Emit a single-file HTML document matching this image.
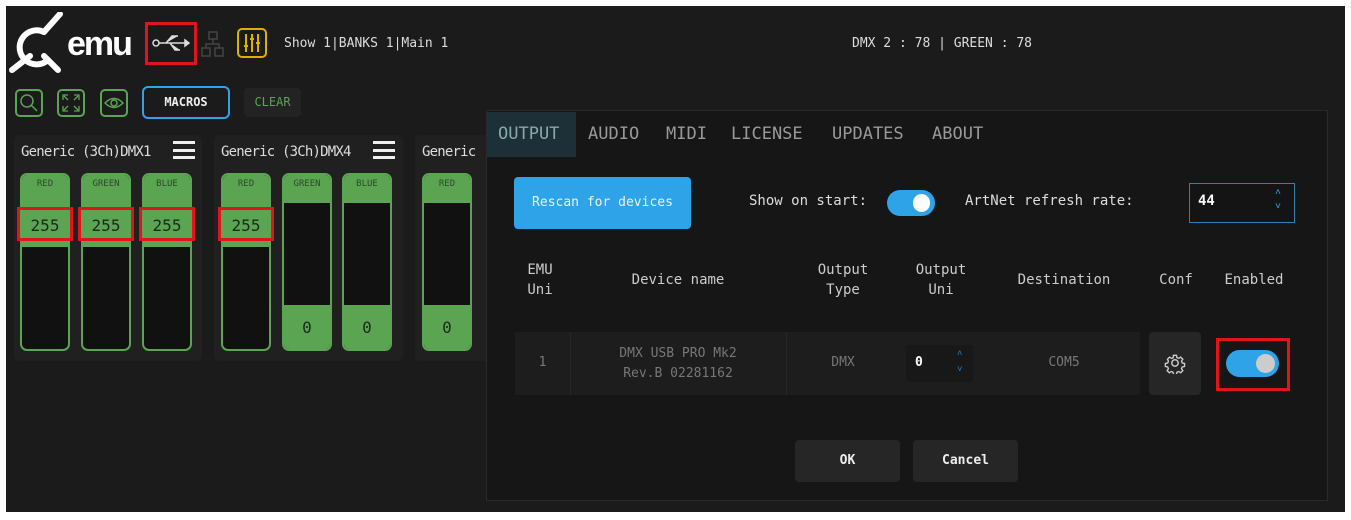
<!DOCTYPE html>
<html><head><meta charset="utf-8"><style>
*{box-sizing:border-box;margin:0;padding:0}
body{width:1351px;height:520px;background:#fff;position:relative;overflow:hidden;font-family:"DejaVu Sans Mono","Liberation Mono",monospace;}
.bg{position:absolute;left:6px;top:6px;width:1339px;height:506px;background:#1b1b1b}
.a{position:absolute}
.t{position:absolute;white-space:nowrap}
.ib{position:absolute;width:28px;height:28px;border:2px solid #5aa452;border-radius:5px}
.panel{position:absolute;top:135px;height:226px;background:#202020;border-radius:6px}
.ph{position:absolute;left:7px;top:9px;color:#ddd;font-size:14px;letter-spacing:-0.8px}
.hb{position:absolute;top:6px;width:22px;height:18px;border-top:3px solid #eee;border-bottom:3px solid #eee}
.hb:after{content:"";position:absolute;left:0;right:0;top:4.5px;border-top:3px solid #eee}
.f{position:absolute;top:173px;width:50px;height:178px;border:2px solid #5aa452;border-radius:7px;background:#111;overflow:hidden}
.f .lab{position:absolute;top:4px;width:100%;text-align:center;font-size:9px;color:#2b4a2a}
.f .g{position:absolute;left:0;right:0;background:#5aa452}
.f .v{position:absolute;width:100%;text-align:center;font-size:16px;color:#1a2a1a}
.rb{position:absolute;border:3px solid #e0141c}
.dlg{position:absolute;left:486px;top:110px;width:842px;height:391px;background:#161616;border:1px solid #2a2a2a}
.th{position:absolute;color:#ccc;font-size:14px;text-align:center;line-height:20px}
.cell{color:#777;font-size:13px;text-align:center;position:absolute}
.tab{position:absolute;top:124px;color:#999;font-size:17px;white-space:nowrap}
</style></head><body>
<div class="bg"></div>

<svg class="a" style="left:8px;top:12px" width="130" height="62" viewBox="0 0 130 62">
<path d="M52 2 L36 20" stroke="#fff" stroke-width="6" stroke-linecap="round" fill="none"/>
<path d="M36 20 A17 17 0 1 0 40 48" stroke="#fff" stroke-width="6" fill="none" stroke-linecap="round"/>
<path d="M22 44 L4 58 M36 44 L50 58" stroke="#fff" stroke-width="6" stroke-linecap="round"/>
<text x="59" y="43" fill="#fff" font-family="Liberation Sans" font-weight="bold" font-size="34" letter-spacing="-2">emu</text>
</svg>
<div class="rb" style="left:145px;top:22px;width:52px;height:43px"></div>
<svg class="a" style="left:152px;top:32px" width="38" height="22" viewBox="0 0 38 22">
<circle cx="4" cy="11" r="3" fill="none" stroke="#ddd" stroke-width="1.5"/>
<path d="M7 11 H33 M14 11 L20 4 H26 M18 11 L23 18 H28 M33 8 L37 11 L33 14 Z" stroke="#ddd" stroke-width="1.5" fill="#ddd"/>
</svg>
<svg class="a" style="left:200px;top:30px" width="26" height="28" viewBox="0 0 26 28"><g stroke="#444" fill="none" stroke-width="1.5"><rect x="9" y="2" width="8" height="7"/><rect x="2" y="18" width="8" height="8"/><rect x="15" y="18" width="8" height="8"/><path d="M13 9V14M6 18V14H19V18"/></g></svg>
<div class="a" style="left:237px;top:28px;width:30px;height:30px;border:2px solid #e0b000;border-radius:5px"></div>
<svg class="a" style="left:241px;top:32px" width="22" height="22" viewBox="0 0 22 22"><g stroke="#e0b000" stroke-width="2"><path d="M5 2V20M11 2V20M17 2V20"/><path d="M3 14H7M9 7H13M15 11H19"/></g></svg>
<div class="t" style="left:284px;top:36px;color:#ddd;font-size:13px">Show 1|BANKS 1|Main 1</div>
<div class="t" style="left:852px;top:36px;color:#ddd;font-size:13px">DMX 2 : 78 | GREEN : 78</div>

<div class="ib" style="left:15px;top:89px"></div>
<svg class="a" style="left:19px;top:93px" width="20" height="20"><circle cx="8" cy="8" r="6" stroke="#5aa452" stroke-width="1.5" fill="none"/><path d="M12 12L18 18" stroke="#5aa452" stroke-width="1.5"/></svg>
<div class="ib" style="left:57px;top:89px"></div>
<svg class="a" style="left:61px;top:93px" width="20" height="20"><path d="M2 7V2H7M13 2H18V7M18 13V18H13M7 18H2V13M3 3L7 7M17 3L13 7M17 17L13 13M3 17L7 13" stroke="#5aa452" stroke-width="1.3" fill="none"/></svg>
<div class="ib" style="left:100px;top:89px"></div>
<svg class="a" style="left:104px;top:93px" width="20" height="20"><path d="M1 10Q10 1 19 10Q10 19 1 10Z" stroke="#5aa452" stroke-width="1.5" fill="none"/><circle cx="10" cy="10" r="3" stroke="#5aa452" fill="none" stroke-width="1.5"/></svg>
<div class="a" style="left:142px;top:86px;width:88px;height:33px;border:2px solid #2ea3e8;border-radius:6px;color:#eee;font-size:12px;text-align:center;line-height:29px;font-weight:bold">MACROS</div>
<div class="a" style="left:244px;top:88px;width:57px;height:29px;background:#232323;border-radius:4px;color:#5aa452;font-size:12px;text-align:center;line-height:29px">CLEAR</div>

<div class="panel" style="left:14px;width:188px"><div class="ph">Generic (3Ch)DMX1</div><div class="hb" style="left:159px"></div></div>
<div class="panel" style="left:214px;width:189px"><div class="ph">Generic (3Ch)DMX4</div><div class="hb" style="left:159px"></div></div>
<div class="panel" style="left:415px;width:80px"><div class="ph">Generic</div></div>

<div class="f" style="left:20px"><div class="g" style="top:0;height:72px"></div><div class="lab">RED</div><div class="v" style="top:41px">255</div></div>
<div class="f" style="left:81px"><div class="g" style="top:0;height:72px"></div><div class="lab">GREEN</div><div class="v" style="top:41px">255</div></div>
<div class="f" style="left:142px"><div class="g" style="top:0;height:72px"></div><div class="lab">BLUE</div><div class="v" style="top:41px">255</div></div>
<div class="f" style="left:221px"><div class="g" style="top:0;height:72px"></div><div class="lab">RED</div><div class="v" style="top:41px">255</div></div>
<div class="f" style="left:282px"><div class="g" style="top:0;height:28px"></div><div class="g" style="top:130px;height:50px"></div><div class="lab">GREEN</div><div class="v" style="top:143px">0</div></div>
<div class="f" style="left:342px"><div class="g" style="top:0;height:28px"></div><div class="g" style="top:130px;height:50px"></div><div class="lab">BLUE</div><div class="v" style="top:143px">0</div></div>
<div class="f" style="left:422px"><div class="g" style="top:0;height:28px"></div><div class="g" style="top:130px;height:50px"></div><div class="lab">RED</div><div class="v" style="top:143px">0</div></div>
<div class="rb" style="left:17px;top:207px;width:56px;height:34px"></div>
<div class="rb" style="left:78px;top:207px;width:56px;height:34px"></div>
<div class="rb" style="left:139px;top:207px;width:56px;height:34px"></div>
<div class="rb" style="left:218px;top:207px;width:56px;height:34px"></div>

<div class="dlg"></div>
<div class="a" style="left:487px;top:112px;width:89px;height:45px;background:#1d3038"></div>
<div class="tab" style="left:498px;color:#8aa">OUTPUT</div>
<div class="tab" style="left:588px">AUDIO</div>
<div class="tab" style="left:666px">MIDI</div>
<div class="tab" style="left:731px">LICENSE</div>
<div class="tab" style="left:832px">UPDATES</div>
<div class="tab" style="left:932px">ABOUT</div>

<div class="a" style="left:514px;top:177px;width:177px;height:52px;background:#2ea3e8;border-radius:4px;color:#e8f6ff;font-size:13px;text-align:center;line-height:52px">Rescan for devices</div>
<div class="t" style="left:749px;top:193px;color:#ddd;font-size:14px">Show on start:</div>
<div class="a" style="left:887px;top:190px;width:48px;height:26px;background:#2ea3e8;border-radius:13px"><div class="a" style="left:26px;top:4px;width:17px;height:18px;border-radius:9px;background:#fff"></div></div>
<div class="t" style="left:965px;top:193px;color:#ddd;font-size:14px">ArtNet refresh rate:</div>
<div class="a" style="left:1189px;top:183px;width:106px;height:40px;border:1.5px solid #2e7fb8;background:#141414"></div>
<div class="t" style="left:1198px;top:193px;color:#fff;font-size:14px;font-weight:bold">44</div>
<div class="t" style="left:1275px;top:186px;color:#2ea3e8;font-size:10px;line-height:14px">˄<br>˅</div>

<div class="th" style="left:515px;top:260px;width:50px">EMU<br>Uni</div>
<div class="th" style="left:600px;top:270px;width:156px">Device name</div>
<div class="th" style="left:800px;top:260px;width:86px">Output<br>Type</div>
<div class="th" style="left:900px;top:260px;width:82px">Output<br>Uni</div>
<div class="th" style="left:1000px;top:270px;width:128px">Destination</div>
<div class="th" style="left:1150px;top:270px;width:52px">Conf</div>
<div class="th" style="left:1215px;top:270px;width:78px">Enabled</div>

<div class="a" style="left:515px;top:332px;width:625px;height:63px;background:#1d1d1d"></div>
<div class="a" style="left:570px;top:332px;width:1px;height:63px;background:#262626"></div>
<div class="a" style="left:786px;top:332px;width:1px;height:63px;background:#262626"></div>
<div class="cell" style="left:515px;top:355px;width:55px">1</div>
<div class="cell" style="left:570px;top:344px;width:216px;line-height:20px">DMX USB PRO Mk2<br>Rev.B 02281162</div>
<div class="cell" style="left:800px;top:355px;width:86px">DMX</div>
<div class="a" style="left:906px;top:345px;width:67px;height:37px;background:#181818;border-radius:3px"></div>
<div class="t" style="left:915px;top:355px;color:#fff;font-size:13px;font-weight:bold">0</div>
<div class="t" style="left:957px;top:346px;color:#2e7fb8;font-size:9px;line-height:16px">˄<br>˅</div>
<div class="cell" style="left:1000px;top:355px;width:128px">COM5</div>
<div class="a" style="left:1149px;top:332px;width:52px;height:63px;background:#262626;border-radius:4px"></div>
<svg class="a" style="left:1164px;top:352px" width="22" height="22" viewBox="0 0 24 24"><circle cx="12" cy="12" r="3.5" fill="none" stroke="#ccc" stroke-width="1.6"/><path d="M10 2h4l.6 3 2.3 1 2.6-1.7 2.8 2.8-1.7 2.6 1 2.3 3 .6v4l-3 .6-1 2.3 1.7 2.6-2.8 2.8-2.6-1.7-2.3 1-.6 3h-4l-.6-3-2.3-1-2.6 1.7-2.8-2.8 1.7-2.6-1-2.3-3-.6v-4l3-.6 1-2.3L2.1 7.1l2.8-2.8 2.6 1.7 2.3-1z" transform="translate(2 2) scale(.83)" fill="none" stroke="#ccc" stroke-width="1.8"/></svg>
<div class="rb" style="left:1216px;top:338px;width:74px;height:53px"></div>
<div class="a" style="left:1226px;top:350px;width:53px;height:27px;background:#2ea3e8;border-radius:14px"><div class="a" style="left:30px;top:4px;width:19px;height:19px;border-radius:10px;background:#ccc"></div></div>

<div class="a" style="left:795px;top:440px;width:105px;height:42px;background:#262626;border-radius:4px;color:#eee;font-size:13px;font-weight:bold;text-align:center;line-height:42px">OK</div>
<div class="a" style="left:913px;top:440px;width:105px;height:42px;background:#262626;border-radius:4px;color:#eee;font-size:13px;font-weight:bold;text-align:center;line-height:42px">Cancel</div>
</body></html>
